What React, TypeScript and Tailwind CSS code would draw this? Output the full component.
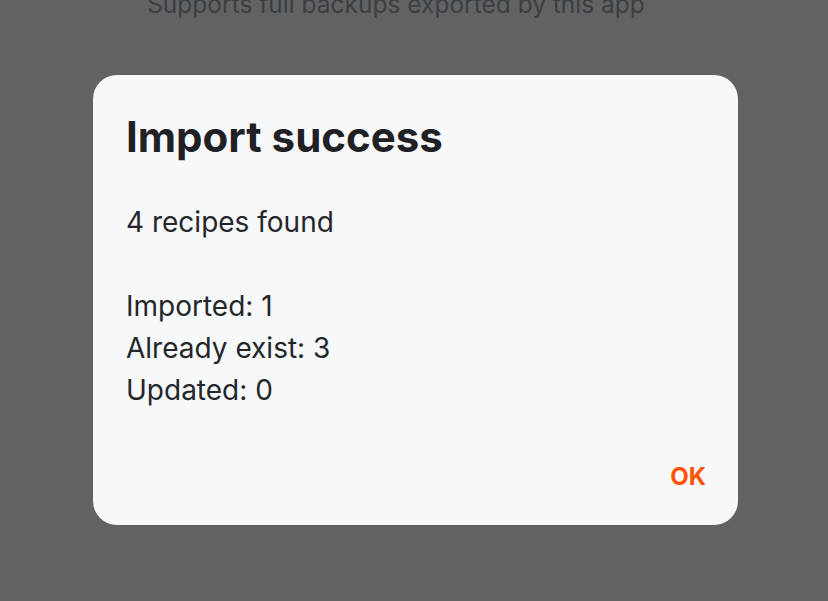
export default function App() {
  return (
    <div
      className="relative flex h-[601px] w-[828px] flex-col items-center overflow-hidden bg-[#616264]"
      style={{ fontFamily: 'Inter, "Noto Sans", sans-serif' }}
    >
      <p className="-mt-[11px] -ml-[36px] text-[24.5px] leading-[30px] text-[#3d3e40]">
        Supports full backups exported by this app
      </p>

      <div className="mt-[56px] ml-[3px] flex h-[450px] w-[645px] flex-col rounded-[24px] bg-[#f7f8fa] px-[33px] pt-[38px]">
        <h1 className="text-[42px] font-bold leading-[48px] text-[#1f2125]">Import success</h1>
        <div className="mt-[40px] text-[28px] leading-[42px] text-[#24262a]">
          <p>4 recipes found</p>
          <p>&nbsp;</p>
          <p>Imported: 1</p>
          <p>Already exist: 3</p>
          <p>Updated: 0</p>
        </div>
        <div className="mt-auto flex justify-end pb-[34px] pr-[-1px]">
          <button className="mr-[-1px] text-[24px] font-bold leading-[28px] text-[#ff5308]">OK</button>
        </div>
      </div>
    </div>
  )
}
